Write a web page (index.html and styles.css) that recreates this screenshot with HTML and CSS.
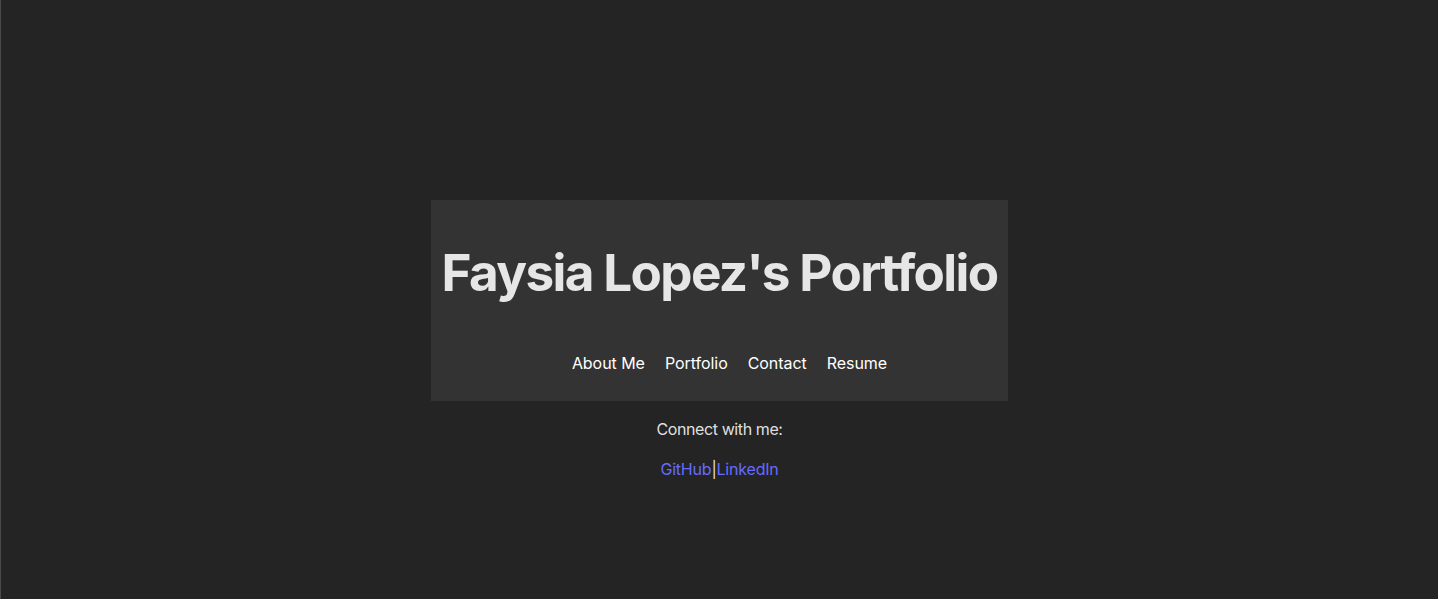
FILE: index.html
```html
<!DOCTYPE html>
<html lang="en">
<head>
<meta charset="utf-8">
<title>Faysia Lopez's Portfolio</title>
<link rel="stylesheet" href="styles.css">
</head>
<body>
<div class="page">
  <header class="hero">
    <h1 class="title">Faysia Lopez's Portfolio</h1>
    <nav class="nav">
      <a href="#about">About Me</a>
      <a href="#portfolio">Portfolio</a>
      <a href="#contact">Contact</a>
      <a href="#resume">Resume</a>
    </nav>
  </header>
  <p class="connect">Connect with me:</p>
  <p class="links"><a href="#github">GitHub</a>|<a href="#linkedin">LinkedIn</a></p>
</div>
</body>
</html>
```
FILE: styles.css
```css
html {
  background: #242424;
  border-left: 1px solid #4a4a4a;
}
body {
  margin: 0;
  font-family: Inter, "Liberation Sans", sans-serif;
  font-size: 16px;
  line-height: 1.5;
  letter-spacing: -0.4px;
  color: rgba(255, 255, 255, 0.87);
  background: #242424;
  min-height: 100vh;
}
.page {
  display: flex;
  flex-direction: column;
  align-items: center;
  padding-top: 200px;
  text-align: center;
}
.hero {
  background: #333333;
  padding: 10px;
}
.title {
  margin: 34px 0 0;
  font-size: 51.2px;
  line-height: 1.1;
  font-weight: 700;
  letter-spacing: -1.63px;
  color: #e6e6e6;
  white-space: nowrap;
}
.nav {
  display: flex;
  justify-content: center;
  gap: 20px;
  padding: 51px 0 16px 20px;
}
.nav a {
  color: #ffffff;
  text-decoration: none;
  font-weight: 400;
  letter-spacing: -0.05px;
}
.connect {
  margin: 16px 0;
}
.links {
  margin: 0 0 16px;
  letter-spacing: -0.2px;
}
.links a {
  color: #646cff;
  text-decoration: none;
  font-weight: 400;
}
```
